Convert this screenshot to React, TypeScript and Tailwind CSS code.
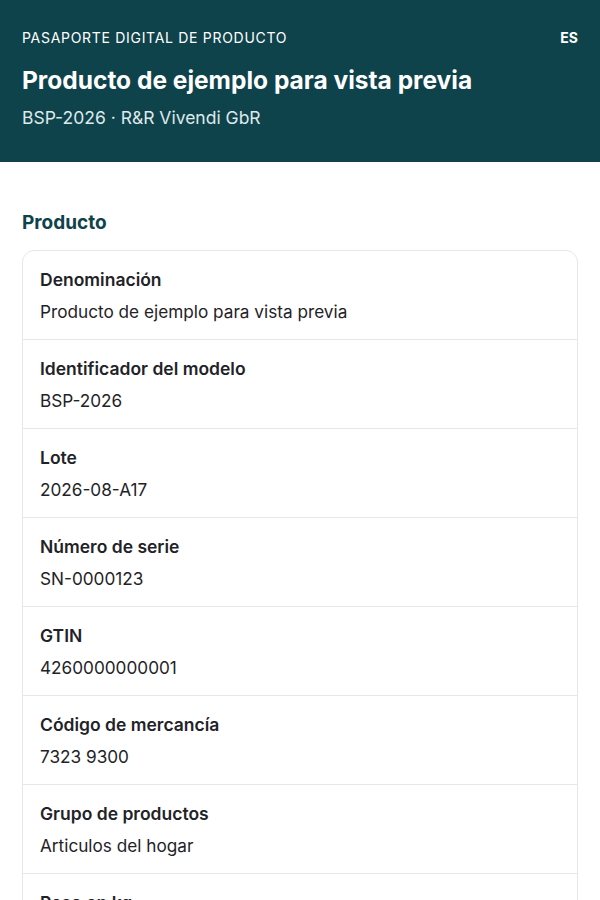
const rows = [
  { label: "Denominación", value: "Producto de ejemplo para vista previa" },
  { label: "Identificador del modelo", value: "BSP-2026" },
  { label: "Lote", value: "2026-08-A17" },
  { label: "Número de serie", value: "SN-0000123" },
  { label: "GTIN", value: "4260000000001" },
  { label: "Código de mercancía", value: "7323 9300" },
  { label: "Grupo de productos", value: "Articulos del hogar" },
  { label: "Peso en kg", value: "1,2" },
];

export default function App() {
  return (
    <div
      className="min-h-screen bg-white text-[#1f2328]"
      style={{ fontFamily: "Inter, 'Noto Sans', sans-serif" }}
    >
      {/* HEADER */}
      <header className="bg-[#0f434c] text-white px-[22px] pt-[28px] pb-[32px]">
        <div className="flex items-center justify-between">
          <p className="text-[14px] leading-[20px] tracking-[0.05em] uppercase">
            Pasaporte digital de producto
          </p>
          <span className="text-[14px] leading-[20px] font-bold">ES</span>
        </div>
        <h1 className="mt-[16px] text-[24.5px] leading-[32px] font-bold">
          Producto de ejemplo para vista previa
        </h1>
        <p className="mt-[10px] text-[17.5px] leading-[24px] text-[#dfe9ea]">
          BSP-2026 · R&amp;R Vivendi GbR
        </p>
      </header>

      {/* SECTION */}
      <section className="px-[22px] pt-[48px]">
        <h2 className="text-[19px] leading-[26px] font-bold text-[#0f434c] mb-[14px]">
          Producto
        </h2>

        <div className="border border-[#e5e7eb] rounded-[12px] overflow-hidden">
          {rows.map((row, i) => (
            <div
              key={i}
              className={`px-[17px] pt-[17px] pb-[15px] ${i !== 0 ? "border-t border-[#e5e7eb]" : ""}`}
            >
              <p className="text-[17.5px] leading-[24px] font-semibold">{row.label}</p>
              <p className="mt-[8px] text-[17.2px] leading-[24px]">{row.value}</p>
            </div>
          ))}
        </div>
      </section>
    </div>
  );
}
